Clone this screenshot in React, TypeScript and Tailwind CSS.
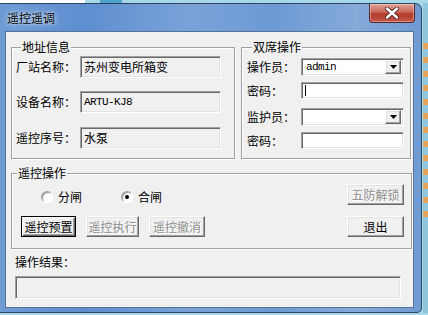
import React from "react";

const CJK = "font-['Noto_Sans_CJK_SC','Noto_Sans',sans-serif]";

// classic win32 bevels
const SUNKEN =
  "border border-t-[#a0a0a0] border-l-[#a0a0a0] border-b-white border-r-white shadow-[inset_1px_1px_0_#696969,inset_-1px_-1px_0_#e3e3e3]";
const RAISED =
  "border border-t-white border-l-white border-b-[#696969] border-r-[#696969] shadow-[inset_-1px_-1px_0_#a0a0a0,inset_1px_1px_0_#e3e3e3]";

function Group({
  legend,
  className,
  children,
}: {
  legend: string;
  className: string;
  children: React.ReactNode;
}) {
  return (
    <fieldset
      className={`border border-[#a0a0a0] shadow-[inset_1px_1px_0_#fff,1px_1px_0_#fff] ${className}`}
    >
      <legend className="ml-[5px] bg-[#f0f0f0] px-[1px] text-[12px] leading-[14px]">{legend}</legend>
      {children}
    </fieldset>
  );
}

function Field({ label, value, mono, mt }: { label: string; value: string; mono?: boolean; mt: string }) {
  return (
    <div className={`flex items-center ${mt}`}>
      <span className="w-[64px] text-[12px] leading-[14px]">{label}</span>
      <div className={`flex h-[22px] w-[141px] items-center bg-[#f0f0f0] pl-[3px] ${SUNKEN}`}>
        <span
          className={
            mono
              ? "font-['Liberation_Mono',monospace] text-[11px] tracking-[-0.6px]"
              : "text-[12px] leading-[14px]"
          }
        >
          {value}
        </span>
      </div>
    </div>
  );
}

function Combo({ value }: { value: string }) {
  return (
    <div className={`flex h-[18px] w-[103px] items-center bg-white p-[2px] ${SUNKEN}`}>
      <span className="flex-1 pl-[2px] font-['Liberation_Mono',monospace] text-[11px] leading-[12px] tracking-[-0.6px]">
        {value}
      </span>
      <div className={`flex h-[14px] w-[16px] items-center justify-center bg-[#f0f0f0] ${RAISED}`}>
        <svg width="7" height="4" viewBox="0 0 7 4">
          <path d="M0 0h7L3.5 4z" fill="#000" />
        </svg>
      </div>
    </div>
  );
}

function Edit({ caret }: { caret?: boolean }) {
  return (
    <div className={`flex h-[17px] w-[103px] items-center bg-white pl-[3px] ${SUNKEN}`}>
      {caret && <div className="h-[11px] w-px bg-black" />}
    </div>
  );
}

function Btn({
  children,
  w,
  disabled,
  focused,
}: {
  children: React.ReactNode;
  w: string;
  disabled?: boolean;
  focused?: boolean;
}) {
  const face = focused
    ? "border border-black shadow-[inset_1px_1px_0_#fff,inset_-1px_-1px_0_#696969,inset_-2px_-2px_0_#a0a0a0]"
    : RAISED;
  return (
    <div
      className={`flex h-[21px] ${w} items-center justify-center bg-[#f0f0f0] text-[12px] leading-[14px] ${face} ${
        disabled ? "text-[#8d8d8d] [text-shadow:1px_1px_0_#fff]" : "text-black"
      }`}
    >
      {children}
    </div>
  );
}

function Radio({ label, checked, className }: { label: string; checked?: boolean; className?: string }) {
  return (
    <div className={`flex items-center ${className ?? ""}`}>
      <div className="flex h-[12px] w-[12px] items-center justify-center rounded-full border border-t-[#a0a0a0] border-l-[#a0a0a0] border-b-white border-r-white bg-white shadow-[inset_1px_1px_0_#9a9a9a]">
        {checked && <div className="h-[4px] w-[4px] rounded-full bg-black" />}
      </div>
      <span className="ml-[5px] text-[12px] leading-[14px]">{label}</span>
    </div>
  );
}

export default function App() {
  return (
    <div className={`h-[315px] w-[428px] overflow-hidden bg-[#a6d8ea] ${CJK} text-black`}>
      {/* desktop strip above the window */}
      <div className="flex h-[3px]">
        <div className="w-[85px] bg-white" />
        <div className="ml-[15px] w-[22px] bg-[#4aa3c8]" />
      </div>
      <div className="flex">
        <div className="h-[310px] w-[422px] rounded-tr-[7px] rounded-br-[5px] border border-l-0 border-[#2e4561] bg-[linear-gradient(90deg,#6f9bd4_0%,#5e8ed0_20%,#7aa2d8_45%,#6d9ad4_65%,#86aad9_85%,#6e9ad3_100%)]">
          {/* title bar */}
          <div className="flex h-[27px] items-start">
            <span className="ml-[7px] mt-[6px] text-[12px] leading-[16px] text-black [text-shadow:0_0_6px_#dbe8f7,0_0_3px_#dbe8f7]">
              遥控遥调
            </span>
            <div className="ml-auto mr-[6px] flex h-[19px] w-[46px] items-center justify-center rounded-b-[4px] border border-t-0 border-[#5a2a26] bg-[linear-gradient(180deg,#e1a395_0%,#c9665a_45%,#b13a2d_55%,#c5564a_100%)] shadow-[inset_0_0_0_1px_rgba(255,255,255,0.35)]">
              <svg width="14" height="12" viewBox="0 0 14 12">
                <path
                  d="M2 1.5L12 10.5M12 1.5L2 10.5"
                  stroke="#4a1f1a"
                  strokeWidth="4.2"
                  strokeLinecap="round"
                />
                <path d="M2 1.5L12 10.5M12 1.5L2 10.5" stroke="#fff" strokeWidth="2.4" strokeLinecap="round" />
              </svg>
            </div>
          </div>

          {/* client area */}
          <div className="ml-[5px] h-[277px] w-[409px] border border-[#54729a] bg-[#f0f0f0] pl-[5px]">
            <div className="mt-[8px] flex">
              <Group legend="地址信息" className="h-[119px] w-[224px] pl-[4px]">
                <Field label="厂站名称：" value="苏州变电所箱变" mt="mt-[2px]" />
                <Field label="设备名称：" value="ARTU-KJ8" mono mt="mt-[13px]" />
                <Field label="遥控序号：" value="水泵" mt="mt-[14px]" />
              </Group>
              <Group legend="双席操作" className="ml-[6px] h-[119px] w-[170px] pl-[5px]">
                <div className="mt-[4px] flex items-center">
                  <span className="w-[54px] text-[12px] leading-[14px]">操作员：</span>
                  <Combo value="admin" />
                </div>
                <div className="mt-[6px] flex items-center">
                  <span className="w-[54px] text-[12px] leading-[14px]">密码：</span>
                  <Edit caret />
                </div>
                <div className="mt-[9px] flex items-center">
                  <span className="w-[54px] text-[12px] leading-[14px]">监护员：</span>
                  <Combo value="" />
                </div>
                <div className="mt-[6px] flex items-center">
                  <span className="w-[54px] text-[12px] leading-[14px]">密码：</span>
                  <Edit />
                </div>
              </Group>
            </div>

            <Group legend="遥控操作" className="mt-[7px] flex h-[83px] w-[401px]">
              <div className="flex-1">
                <div className="ml-[29px] mt-[10px] flex">
                  <Radio label="分闸" />
                  <Radio label="合闸" checked className="ml-[39px]" />
                </div>
                <div className="ml-[9px] mt-[12px] flex gap-[10px]">
                  <Btn w="w-[55px]" focused>
                    遥控预置
                  </Btn>
                  <Btn w="w-[53px]" disabled>
                    遥控执行
                  </Btn>
                  <Btn w="w-[56px]" disabled>
                    遥控撤消
                  </Btn>
                </div>
              </div>
              <div className="mr-[7px] mt-[4px] flex flex-col gap-[11px]">
                <Btn w="w-[57px]" disabled>
                  五防解锁
                </Btn>
                <Btn w="w-[57px]">退出</Btn>
              </div>
            </Group>

            <div className="ml-[4px] mt-[6px] text-[12px] leading-[14px]">操作结果：</div>
            <div className={`ml-[4px] mt-[7px] h-[23px] w-[386px] bg-[#f0f0f0] ${SUNKEN}`} />
          </div>
        </div>
        {/* sliver of desktop to the right */}
        <div className="ml-[1px] flex w-[5px] flex-col bg-[#8ec6de]">
          <div className="mt-[40px] h-[180px] bg-[repeating-linear-gradient(180deg,#e8a35a_0px,#e8a35a_6px,#8ec6de_6px,#8ec6de_14px)]" />
        </div>
      </div>
    </div>
  );
}
